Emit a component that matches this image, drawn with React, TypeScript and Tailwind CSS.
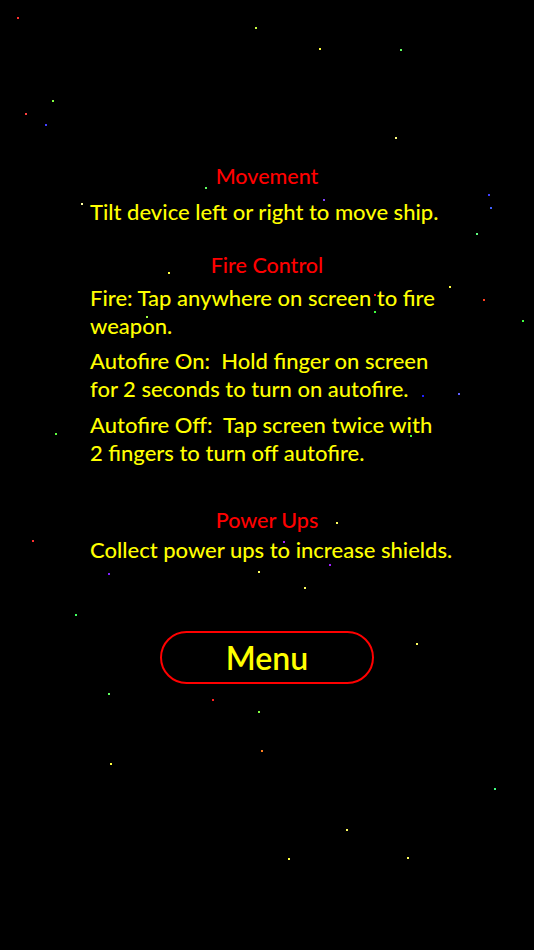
import React from 'react';

// starfield dots: [x, y, colour]
const stars: [number, number, string][] = [
  [17, 17, '#ff3030'], [255, 27, '#c8ff40'], [319, 48, '#ffff40'], [400, 49, '#60ff60'],
  [52, 100, '#80ff40'], [25, 113, '#ff4040'], [45, 124, '#4040ff'], [395, 137, '#ffff80'],
  [205, 187, '#60ff60'], [81, 203, '#ffffa0'], [323, 199, '#8040ff'], [488, 194, '#4040ff'],
  [490, 207, '#4060ff'], [476, 233, '#60ff80'], [168, 272, '#ffff40'], [449, 286, '#ffff40'],
  [374, 294, '#ff2020'], [483, 299, '#ff4020'], [374, 311, '#40ff40'], [146, 316, '#a0ff40'],
  [522, 320, '#40ff40'], [182, 359, '#ff2020'], [422, 395, '#2020ff'], [458, 393, '#6060ff'],
  [410, 435, '#40ff40'], [55, 433, '#60ff40'], [336, 522, '#ffff60'], [32, 540, '#ff3030'],
  [283, 541, '#a020ff'], [329, 564, '#a020ff'], [258, 571, '#ffff60'], [304, 587, '#ffff60'],
  [108, 573, '#8020ff'], [75, 614, '#40ff60'], [416, 643, '#ffff60'], [108, 693, '#60ff60'],
  [212, 699, '#ff2020'], [258, 711, '#80ff40'], [261, 750, '#ff8020'], [110, 763, '#ffff40'],
  [494, 788, '#40ff80'], [346, 829, '#ffff60'], [288, 858, '#ffff40'], [407, 857, '#ffff60'],
];

const font = { fontFamily: 'Lato, "Noto Sans", sans-serif' };

const Heading: React.FC<{ children: React.ReactNode; className?: string }> = ({ children, className }) => (
  <h2 className={`text-center text-[21.5px] font-medium leading-[28px] text-[#ff0000] ${className ?? ''}`}>{children}</h2>
);

const Line: React.FC<{ children: React.ReactNode; className?: string }> = ({ children, className }) => (
  <p className={`whitespace-pre text-[22px] font-medium leading-[28px] text-[#ffff00] ${className ?? ''}`}>{children}</p>
);

export default function App() {
  return (
    <div className="relative w-[534px] h-[950px] overflow-hidden bg-black" style={font}>
      {stars.map(([x, y, c], i) => (
        <span
          key={i}
          className="absolute w-[2px] h-[2px]"
          style={{ left: x, top: y, backgroundColor: c }}
        />
      ))}

      <div className="relative flex flex-col pt-[162px]">
        <Heading>Movement</Heading>
        <Line className="mt-[8px] pl-[90px]">Tilt device left or right to move ship.</Line>

        <Heading className="mt-[25px]">Fire Control</Heading>
        <Line className="mt-[5px] pl-[90px]">
          Fire: Tap anywhere on screen to fire{'\n'}weapon.
        </Line>
        <Line className="mt-[7px] pl-[90px]">
          Autofire On:  Hold finger on screen{'\n'}for 2 seconds to turn on autofire.
        </Line>
        <Line className="mt-[8px] pl-[90px]">
          Autofire Off:  Tap screen twice with{'\n'}2 fingers to turn off autofire.
        </Line>

        <Heading className="mt-[39px]">Power Ups</Heading>
        <Line className="mt-[2px] pl-[90px]">Collect power ups to increase shields.</Line>

        <div className="mt-[67px] flex justify-center">
          <button className="w-[214px] h-[53px] rounded-full border-2 border-[#ff0000] text-[32px] font-semibold text-[#ffff00] leading-none">
            Menu
          </button>
        </div>
      </div>
    </div>
  );
}
